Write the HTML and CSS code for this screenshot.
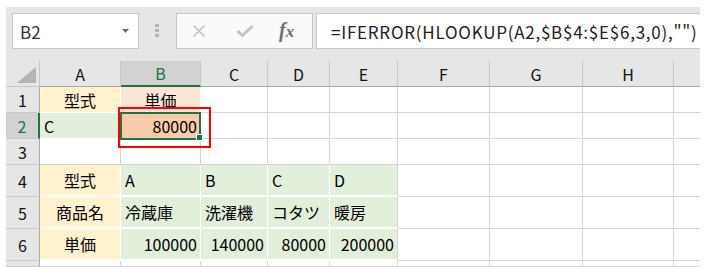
FILE: index.html
```html
<!DOCTYPE html>
<html lang="ja">
<head>
<meta charset="utf-8">
<link rel="stylesheet" href="styles.css">
</head>
<body>
<div class="app">
  <div class="fbar">
    <div class="namebox">
      <span class="ref">B2</span>
      <svg class="arrow" width="7" height="4" viewBox="0 0 7 4"><path d="M0 0H7L3.5 4Z" fill="#6b6b6b"/></svg>
    </div>
    <div class="grip"><i></i><i></i><i></i></div>
    <div class="btns">
      <svg class="ic-x" width="16" height="12" viewBox="0 0 16 12"><path d="M2.5 0.5L13.5 11.5M13.5 0.5L2.5 11.5" stroke="#c4c4c4" stroke-width="1.6" fill="none"/></svg>
      <svg class="ic-ok" width="18" height="12" viewBox="0 0 18 12"><path d="M1.5 6L6.5 10.5L16.5 1.2" stroke="#c4c4c4" stroke-width="3" fill="none"/></svg>
      <span class="fx">f<span class="x">x</span></span>
    </div>
    <div class="formula">=IFERROR(HLOOKUP(A2,$B$4:$E$6,3,0),"")</div>
  </div>
  <div class="sheet">
    <div class="corner"><svg width="19" height="16" viewBox="0 0 19 16"><path d="M19 0V16H0Z" fill="#b5b5b5"/></svg></div>
    <div class="ch">A</div>
    <div class="ch sel">B</div>
    <div class="ch">C</div>
    <div class="ch">D</div>
    <div class="ch">E</div>
    <div class="ch">F</div>
    <div class="ch">G</div>
    <div class="ch">H</div>
    <div class="ch last"></div>

    <div class="rh">1</div>
    <div class="c yl ctr">型式</div>
    <div class="c pk ctr">単価</div>
    <div class="c"></div><div class="c"></div><div class="c"></div><div class="c"></div><div class="c"></div><div class="c"></div><div class="c last"></div>

    <div class="rh sel">2</div>
    <div class="c gr">C</div>
    <div class="c or num">80000</div>
    <div class="c"></div><div class="c"></div><div class="c"></div><div class="c"></div><div class="c"></div><div class="c"></div><div class="c last"></div>

    <div class="rh">3</div>
    <div class="c"></div><div class="c"></div><div class="c"></div><div class="c"></div><div class="c"></div><div class="c"></div><div class="c"></div><div class="c"></div><div class="c last"></div>

    <div class="rh">4</div>
    <div class="c yl ctr t">型式</div>
    <div class="c gr t">A</div>
    <div class="c gr t">B</div>
    <div class="c gr t">C</div>
    <div class="c gr t end">D</div>
    <div class="c"></div><div class="c"></div><div class="c"></div><div class="c last"></div>

    <div class="rh">5</div>
    <div class="c yl ctr t">商品名</div>
    <div class="c gr t">冷蔵庫</div>
    <div class="c gr t">洗濯機</div>
    <div class="c gr t">コタツ</div>
    <div class="c gr t end">暖房</div>
    <div class="c"></div><div class="c"></div><div class="c"></div><div class="c last"></div>

    <div class="rh">6</div>
    <div class="c yl ctr t">単価</div>
    <div class="c gr num t">100000</div>
    <div class="c gr num t">140000</div>
    <div class="c gr num t">80000</div>
    <div class="c gr num t end">200000</div>
    <div class="c"></div><div class="c"></div><div class="c"></div><div class="c last"></div>

    <div class="rh"></div>
    <div class="c"></div><div class="c"></div><div class="c"></div><div class="c"></div><div class="c"></div><div class="c"></div><div class="c"></div><div class="c"></div><div class="c last"></div>

    <div class="selbox"></div>
    <div class="handle"></div>
    <div class="redbox"></div>
  </div>
</div>
</body>
</html>
```

FILE: styles.css
```css
* { box-sizing: border-box; }
html, body { margin: 0; padding: 0; background: #fff; }
body { font-family: "Noto Sans CJK JP", "Noto Sans", sans-serif; color: #000; }
.app {
  margin: 7px 10px 0 6px;
  height: 260px;
  background: #e6e6e6;
  overflow: hidden;
}
.fbar {
  height: 54px;
  display: flex;
  align-items: flex-start;
  padding: 6px 0 0 6px;
}
.namebox {
  width: 127px;
  height: 36px;
  background: #fff;
  border: 1px solid #c6c6c6;
  display: flex;
  align-items: center;
  padding: 0 0 0 7px;
}
.ref { font-size: 17px; color: #333; flex: 1; }
.arrow { margin-right: 9px; }
.grip {
  width: 4px;
  margin: 11px 17px 0 16px;
  display: flex;
  flex-direction: column;
  gap: 2px;
}
.grip i { display: block; width: 4px; height: 3px; background: #b3b3b3; }
.btns {
  width: 137px;
  height: 36px;
  background: #fafafa;
  border: 1px solid #c6c6c6;
  display: flex;
  align-items: center;
  padding-left: 14px;
}
.ic-x { margin-right: 29px; }
.ic-ok { margin-right: 25px; }
.fx {
  font-family: "Liberation Serif", serif;
  font-style: italic;
  font-weight: bold;
  font-size: 20px;
  color: #707070;
  line-height: 1;
  margin-top: -2px;
}
.fx .x { font-size: 17px; }
.formula {
  flex: 1;
  height: 36px;
  margin-left: 3px;
  background: #fff;
  border: 1px solid #c6c6c6;
  border-right: none;
  display: flex;
  align-items: center;
  padding-left: 14px;
  font-size: 17px;
  letter-spacing: 0.75px;
  color: #222;
  white-space: nowrap;
  overflow: hidden;
}
.sheet {
  position: relative;
  display: grid;
  grid-template-columns: 34px 81px 80px 67px 62px 68px 92px 93px 91px 1fr;
  grid-template-rows: 26px 26px 26px 26px 32px 32px 32px 1fr;
  height: 206px;
}
.corner {
  border-right: 1px solid #c6c6c6;
  border-bottom: 1px solid #c6c6c6;
  display: flex;
  align-items: flex-end;
  justify-content: flex-end;
  padding: 0 3px 3px 0;
  background: #e6e6e6;
}
.ch {
  background: #e6e6e6;
  border-right: 1px solid #c9c9c9;
  border-bottom: 1px solid #ababab;
  display: flex;
  align-items: center;
  justify-content: center;
  font-size: 16px;
  color: #111;
}
.ch.sel {
  background: #d2d2d2;
  color: #217346;
  border-bottom: 2px solid #217346;
}
.ch.last, .c.last { border-right: none; }
.rh {
  background: #e6e6e6;
  border-right: 1px solid #ababab;
  border-bottom: 1px solid #c9c9c9;
  display: flex;
  align-items: center;
  justify-content: center;
  font-size: 16px;
  color: #111;
}
.rh.sel {
  background: #d2d2d2;
  color: #217346;
  border-right: 2px solid #217346;
}
.c {
  background: #fff;
  border-right: 1px solid #d4d4d4;
  border-bottom: 1px solid #d4d4d4;
  display: flex;
  align-items: center;
  padding: 0 4px;
  font-size: 16px;
  white-space: nowrap;
}
.c.ctr { justify-content: center; }
.c.num { justify-content: flex-end; padding-right: 3px; }
.yl { background: #fff2cc; border-color: #fff; }
.pk { background: #fce4d6; border-color: #fff; }
.gr { background: #e2efda; border-color: #fff; }
.or { background: #f8cbad; border-color: #fff; }
.c.t { border-bottom-width: 2px; }
.c.end { border-right-color: #d4d4d4; }
.selbox {
  position: absolute;
  left: 114px;
  top: 51px;
  width: 81px;
  height: 28px;
  border: 2px solid #217346;
}
.handle {
  position: absolute;
  left: 190px;
  top: 73px;
  width: 7px;
  height: 7px;
  background: #217346;
  border: 1px solid #fff;
}
.redbox {
  position: absolute;
  left: 112px;
  top: 46px;
  width: 93px;
  height: 41px;
  border: 2px solid #ff0000;
}
```
